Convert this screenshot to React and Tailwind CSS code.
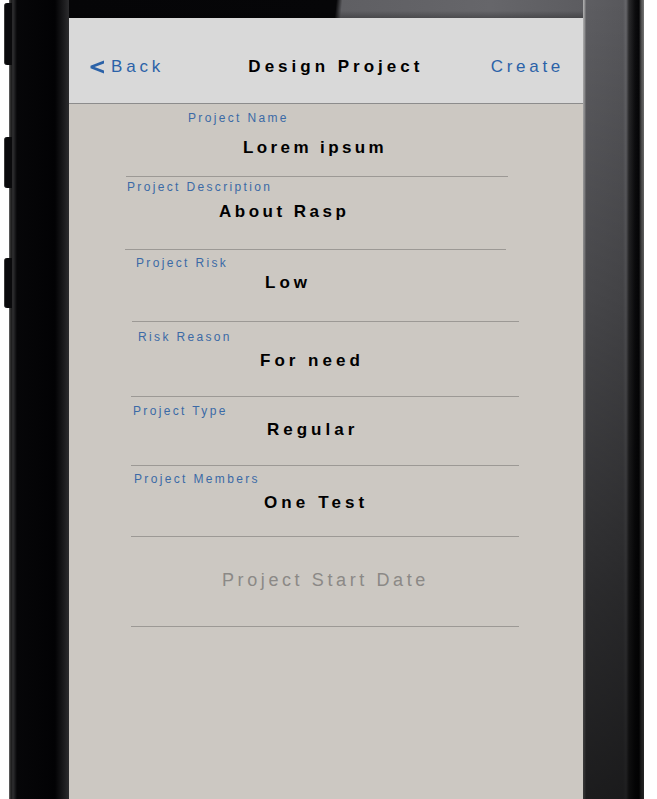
import React from 'react';

const fields = [
  { label: 'Project Name', value: 'Lorem ipsum', box: 'ml-[57px] w-[382px] pt-[7px] pb-[18px]', labelPad: 'pl-[62px]', valuePad: 'pl-[117px] mt-[13px] tracking-[3.4px]' },
  { label: 'Project Description', value: 'About Rasp', box: 'ml-[56px] w-[381px] pt-[3px] pb-[27px]', labelPad: 'pl-[2px]', valuePad: 'pl-[94px] mt-[8px] tracking-[3.5px]' },
  { label: 'Project Risk', value: 'Low', box: 'ml-[63px] w-[387px] pt-[6px] pb-[28px]', labelPad: 'pl-[4px]', valuePad: 'pl-[133px] mt-[3px] tracking-[4px]' },
  { label: 'Risk Reason', value: 'For need', box: 'ml-[62px] w-[388px] pt-[8px] pb-[25px]', labelPad: 'pl-[7px]', valuePad: 'pl-[129px] mt-[7px] tracking-[4px]' },
  { label: 'Project Type', value: 'Regular', box: 'ml-[62px] w-[388px] pt-[7px] pb-[25px]', labelPad: 'pl-[2px]', valuePad: 'pl-[136px] mt-[2px] tracking-[4px]' },
  { label: 'Project Members', value: 'One Test', box: 'ml-[62px] w-[388px] pt-[6px] pb-[23px]', labelPad: 'pl-[3px]', valuePad: 'pl-[133px] mt-[7px] tracking-[4.1px]' },
];

const Field = ({ field }) => (
  <div className={`${field.box} border-b border-[#9c9995]`}>
    <div className={`${field.labelPad} text-[12px] leading-[14px] tracking-[2.35px] text-[#3b6aa6]`}>
      {field.label}
    </div>
    <div className={`${field.valuePad} text-[17px] leading-[20px] font-bold text-black`}>
      {field.value}
    </div>
  </div>
);

export default function App() {
  return (
    <div className="relative w-[657px] h-[799px] overflow-hidden bg-white font-['Liberation_Sans',Arial,sans-serif]">
      {/* side buttons */}
      <div className="absolute left-[4px] top-[3px] w-[8px] h-[62px] rounded-l-[3px] bg-[#0a0a0c] border-l border-[#3a3a3a]" />
      <div className="absolute left-[4px] top-[137px] w-[8px] h-[51px] rounded-l-[3px] bg-[#0a0a0c] border-l border-[#3a3a3a]" />
      <div className="absolute left-[4px] top-[258px] w-[8px] h-[50px] rounded-l-[3px] bg-[#0a0a0c] border-l border-[#3a3a3a]" />

      {/* phone body */}
      <div className="ml-[9px] w-[635px] h-full flex">
        <div className="w-[60px] h-full bg-[linear-gradient(to_right,#6b6b6b_0px,#1a1a1a_2px,#2e2e30_4px,#060608_8px,#020204_46px,#19191b_54px,#2c2c2e_60px)]" />

        <div className="w-[514px] h-full flex flex-col">
          <div className="h-[18px] shrink-0 bg-[linear-gradient(96deg,#050507_0px,#060608_266px,#5f5f63_272px,#66666a_420px,#5c5c60_100%)]">
            <div className="h-full bg-[linear-gradient(to_bottom,transparent_60%,rgba(0,0,0,0.25))]" />
          </div>

          {/* screen */}
          <div className="flex-1 flex flex-col bg-[#ccc8c2]">
            <div className="h-[86px] shrink-0 bg-[#d9d9d9] border-b border-[#8c8c8c] flex items-center justify-between pl-[21px] pr-[19px] pt-[12px]">
              <div className="flex items-center text-[#2b62a8]">
                <svg width="15" height="14" viewBox="0 0 15 14" className="mr-[6px]">
                  <polygon points="14,0.5 14,3.6 4.6,7 14,10.4 14,13.5 0.5,8.3 0.5,5.7" fill="#2b62a8" />
                </svg>
                <span className="text-[17px] leading-[20px] tracking-[3.8px]">Back</span>
              </div>
              <div className="ml-[17px] text-[17px] leading-[20px] font-bold tracking-[4px] text-black">
                Design Project
              </div>
              <div className="text-[17px] leading-[20px] tracking-[3.7px] text-[#2b62a8]">Create</div>
            </div>

            <div className="flex flex-col">
              {fields.map((f) => (
                <Field key={f.label} field={f} />
              ))}
              <div className="ml-[62px] w-[388px] pt-[32px] pb-[35px] border-b border-[#9c9995]">
                <div className="pl-[91px] text-[18px] leading-[22px] tracking-[3.6px] text-[#8b8986]">
                  Project Start Date
                </div>
              </div>
            </div>
          </div>
        </div>

        <div className="relative w-[61px] h-full bg-[linear-gradient(to_right,#b4b4b4_0px,#8a8a8c_2px,#5e5e62_3px,#58585c_40px,#66666a_43px,#2a2a2c_46px,#0c0c0e_52px,#050507_56px,#4a4a4a_58px,#777_61px)]">
          <div className="absolute inset-0 bg-[linear-gradient(to_bottom,rgba(0,0,0,0)_0px,rgba(0,0,0,0.25)_300px,rgba(0,0,0,0.55)_600px,rgba(0,0,0,0.7)_100%)]" />
        </div>
      </div>
    </div>
  );
}
